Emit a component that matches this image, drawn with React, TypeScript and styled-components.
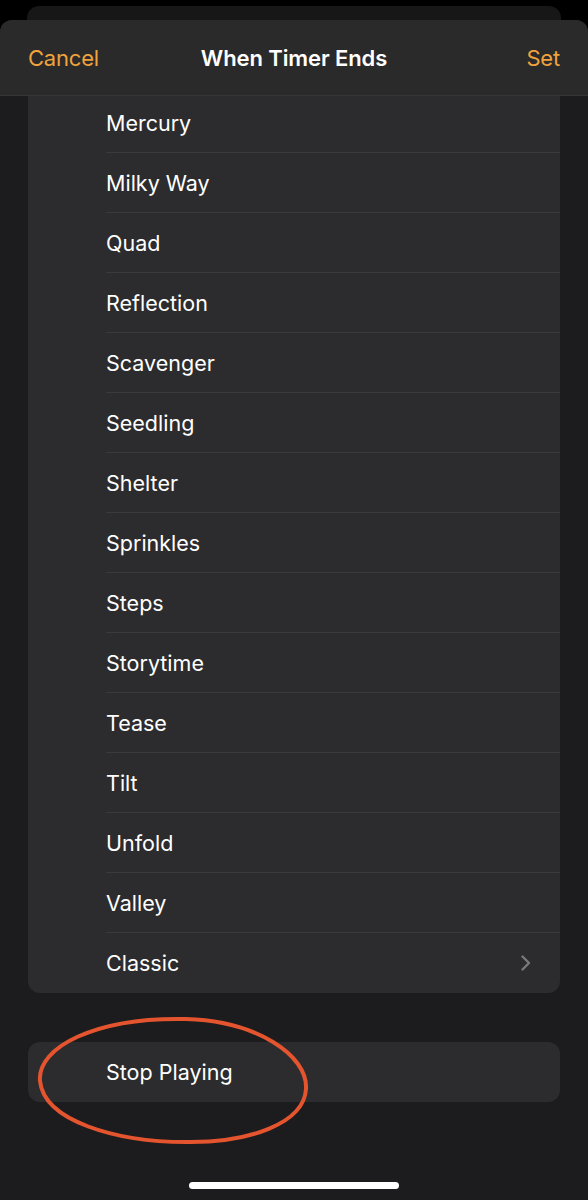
import React from 'react';
import styled, { createGlobalStyle } from 'styled-components';

const GlobalStyle = createGlobalStyle`
  html, body {
    margin: 0;
    padding: 0;
    background: #000;
  }
  body {
    font-family: Inter, "Liberation Sans", sans-serif;
    -webkit-font-smoothing: antialiased;
  }
`;

const Screen = styled.div`
  width: 588px;
  height: 1200px;
  background: #000;
  overflow: hidden;
  padding-top: 6px;
  box-sizing: border-box;
`;

const BackSheet = styled.div`
  height: 14px;
  margin: 0 27px;
  background: #171717;
  border-radius: 12px 12px 0 0;
`;

const Sheet = styled.div`
  position: relative;
  height: 1180px;
  background: #1c1c1e;
  border-radius: 12px 12px 0 0;
  overflow: hidden;
  display: flex;
  flex-direction: column;
`;

const Header = styled.div`
  position: relative;
  z-index: 1;
  height: 76px;
  flex-shrink: 0;
  display: flex;
  align-items: center;
  justify-content: space-between;
  padding: 0 28px;
  background: #2a2a2b;
  border-bottom: 1px solid rgba(255, 255, 255, 0.06);
  box-sizing: border-box;
`;

const HeaderButton = styled.span`
  color: #f0a33c;
  font-size: 22px;
  letter-spacing: -0.2px;
`;

const Title = styled.span`
  position: absolute;
  left: 0;
  right: 0;
  text-align: center;
  pointer-events: none;
  color: #fff;
  font-size: 22px;
  font-weight: 600;
  letter-spacing: -0.1px;
`;

const Body = styled.div`
  display: flex;
  flex-direction: column;
  padding: 0 28px;
`;

const Group = styled.div<{ $top?: number }>`
  position: relative;
  margin-top: ${p => p.$top ?? 0}px;
  background: #2c2c2e;
  border-radius: ${p => (p.$top && p.$top > 0 ? '12px' : '0 0 12px 12px')};
`;

const Row = styled.div`
  height: 60px;
  padding-left: 78px;
  display: flex;
`;

const RowInner = styled.div<{ $last?: boolean }>`
  flex: 1;
  display: flex;
  align-items: center;
  justify-content: space-between;
  padding-right: 28px;
  border-bottom: ${p => (p.$last ? 'none' : '1px solid #3a3a3c')};
`;

const Label = styled.span`
  color: #fff;
  font-size: 21.5px;
`;

const Chevron = styled.svg`
  width: 12px;
  height: 18px;
`;

const Annotation = styled.svg`
  position: absolute;
  left: 8px;
  top: -27px;
  width: 280px;
  height: 132px;
  pointer-events: none;
  overflow: visible;
`;

const HomeBar = styled.div`
  position: absolute;
  left: 50%;
  bottom: 11px;
  width: 210px;
  height: 7px;
  margin-left: -105px;
  border-radius: 4px;
  background: #fff;
`;

const tones = [
  'Mercury',
  'Milky Way',
  'Quad',
  'Reflection',
  'Scavenger',
  'Seedling',
  'Shelter',
  'Sprinkles',
  'Steps',
  'Storytime',
  'Tease',
  'Tilt',
  'Unfold',
  'Valley',
  'Classic',
];

export default function App() {
  return (
    <>
      <GlobalStyle />
      <Screen>
        <BackSheet />
        <Sheet>
          <Header>
            <HeaderButton>Cancel</HeaderButton>
            <Title>When Timer Ends</Title>
            <HeaderButton>Set</HeaderButton>
          </Header>
          <Body>
            <Group $top={-3}>
              {tones.map((name, i) => {
                const last = i === tones.length - 1;
                return (
                  <Row key={name}>
                    <RowInner $last={last}>
                      <Label>{name}</Label>
                      {last && (
                        <Chevron viewBox="0 0 12 18">
                          <path
                            d="M2.5 2.5 L9 9 L2.5 15.5"
                            fill="none"
                            stroke="#78787d"
                            strokeWidth="2.4"
                            strokeLinecap="round"
                            strokeLinejoin="round"
                          />
                        </Chevron>
                      )}
                    </RowInner>
                  </Row>
                );
              })}
            </Group>
            <Group $top={49}>
              <Row>
                <RowInner $last>
                  <Label>Stop Playing</Label>
                </RowInner>
              </Row>
              <Annotation viewBox="0 0 280 132">
                <path
                  d="M150 4 C 220 6, 272 40, 270 74 C 268 108, 214 128, 150 127 C 80 127, 8 106, 4 66 C 1 32, 60 2, 150 4 Z"
                  fill="none"
                  stroke="#e4542e"
                  strokeWidth="4"
                />
              </Annotation>
            </Group>
          </Body>
          <HomeBar />
        </Sheet>
      </Screen>
    </>
  );
}
